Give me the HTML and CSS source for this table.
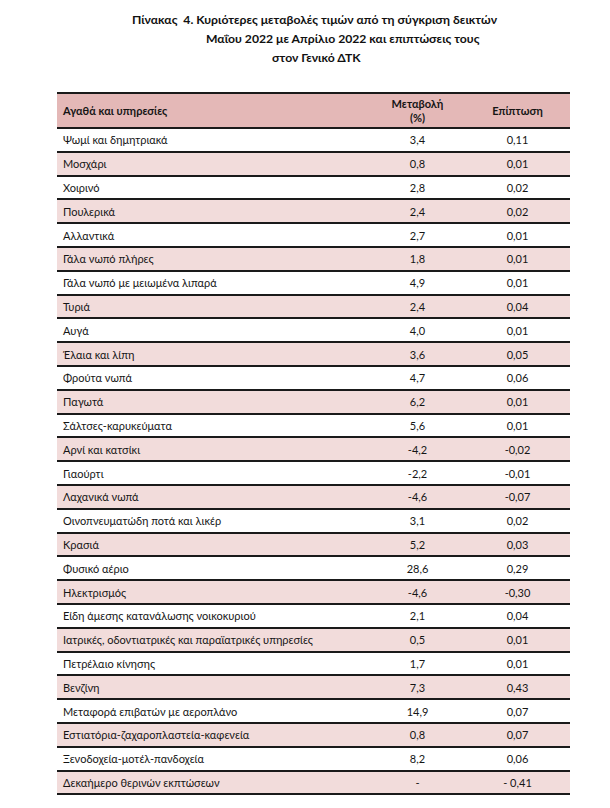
FILE: index.html
```html
<!DOCTYPE html>
<html lang="el">
<head>
<meta charset="utf-8">
<link rel="stylesheet" href="styles.css">
</head>
<body>
<div class="page">
  <div class="title">
    <div class="t1">Πίνακας&nbsp; 4. Κυριότερες μεταβολές τιμών από τη σύγκριση δεικτών</div>
    <div class="t2">Μαΐου 2022 με Απρίλιο 2022 και επιπτώσεις τους</div>
    <div class="t3">στον Γενικό ΔΤΚ</div>
  </div>
  <div class="table">
    <div class="row head">
      <div class="c1">Αγαθά και υπηρεσίες</div>
      <div class="c2">Μεταβολή<br>(%)</div>
      <div class="c3">Επίπτωση</div>
    </div>
    <div class="row"><div class="c1">Ψωμί και δημητριακά</div><div class="c2">3,4</div><div class="c3">0,11</div></div>
    <div class="row alt"><div class="c1">Μοσχάρι</div><div class="c2">0,8</div><div class="c3">0,01</div></div>
    <div class="row"><div class="c1">Χοιρινό</div><div class="c2">2,8</div><div class="c3">0,02</div></div>
    <div class="row alt"><div class="c1">Πουλερικά</div><div class="c2">2,4</div><div class="c3">0,02</div></div>
    <div class="row"><div class="c1">Αλλαντικά</div><div class="c2">2,7</div><div class="c3">0,01</div></div>
    <div class="row alt"><div class="c1">Γάλα νωπό πλήρες</div><div class="c2">1,8</div><div class="c3">0,01</div></div>
    <div class="row"><div class="c1">Γάλα νωπό με μειωμένα λιπαρά</div><div class="c2">4,9</div><div class="c3">0,01</div></div>
    <div class="row alt"><div class="c1">Τυριά</div><div class="c2">2,4</div><div class="c3">0,04</div></div>
    <div class="row"><div class="c1">Αυγά</div><div class="c2">4,0</div><div class="c3">0,01</div></div>
    <div class="row alt"><div class="c1">Έλαια και λίπη</div><div class="c2">3,6</div><div class="c3">0,05</div></div>
    <div class="row"><div class="c1">Φρούτα νωπά</div><div class="c2">4,7</div><div class="c3">0,06</div></div>
    <div class="row alt"><div class="c1">Παγωτά</div><div class="c2">6,2</div><div class="c3">0,01</div></div>
    <div class="row"><div class="c1">Σάλτσες-καρυκεύματα</div><div class="c2">5,6</div><div class="c3">0,01</div></div>
    <div class="row alt"><div class="c1">Αρνί και κατσίκι</div><div class="c2">-4,2</div><div class="c3">-0,02</div></div>
    <div class="row"><div class="c1">Γιαούρτι</div><div class="c2">-2,2</div><div class="c3">-0,01</div></div>
    <div class="row alt"><div class="c1">Λαχανικά νωπά</div><div class="c2">-4,6</div><div class="c3">-0,07</div></div>
    <div class="row"><div class="c1">Οινοπνευματώδη ποτά και λικέρ</div><div class="c2">3,1</div><div class="c3">0,02</div></div>
    <div class="row alt"><div class="c1">Κρασιά</div><div class="c2">5,2</div><div class="c3">0,03</div></div>
    <div class="row"><div class="c1">Φυσικό αέριο</div><div class="c2">28,6</div><div class="c3">0,29</div></div>
    <div class="row alt"><div class="c1">Ηλεκτρισμός</div><div class="c2">-4,6</div><div class="c3">-0,30</div></div>
    <div class="row"><div class="c1">Είδη άμεσης κατανάλωσης νοικοκυριού</div><div class="c2">2,1</div><div class="c3">0,04</div></div>
    <div class="row alt"><div class="c1">Ιατρικές, οδοντιατρικές και παραϊατρικές υπηρεσίες</div><div class="c2">0,5</div><div class="c3">0,01</div></div>
    <div class="row"><div class="c1">Πετρέλαιο κίνησης</div><div class="c2">1,7</div><div class="c3">0,01</div></div>
    <div class="row alt"><div class="c1">Βενζίνη</div><div class="c2">7,3</div><div class="c3">0,43</div></div>
    <div class="row"><div class="c1">Μεταφορά επιβατών με αεροπλάνο</div><div class="c2">14,9</div><div class="c3">0,07</div></div>
    <div class="row alt"><div class="c1">Εστιατόρια-ζαχαροπλαστεία-καφενεία</div><div class="c2">0,8</div><div class="c3">0,07</div></div>
    <div class="row"><div class="c1">Ξενοδοχεία-μοτέλ-πανδοχεία</div><div class="c2">8,2</div><div class="c3">0,06</div></div>
    <div class="row alt"><div class="c1">Δεκαήμερο θερινών εκπτώσεων</div><div class="c2">-</div><div class="c3">- 0,41</div></div>
  </div>
</div>
</body>
</html>
```
FILE: styles.css
```css
html, body {
  margin: 0;
  padding: 0;
  background: #ffffff;
}
body {
  font-family: "Lato", "Open Sans", sans-serif;
  color: #151515;
  font-size: 11px;
}
.page {
  width: 610px;
  padding-top: 10px;
}
.title {
  font-weight: bold;
  font-size: 12.2px;
  line-height: 19px;
  color: #111;
}
.t1 { margin-left: 132px; }
.t2 { margin-left: 206px; }
.t3 { margin-left: 272px; }
.table {
  margin-top: 25px;
  margin-left: 57px;
  width: 513px;
  border-top: 2px solid #1a1a1a;
}
.row {
  display: grid;
  grid-template-columns: 313px 95px 105px;
  align-items: center;
  height: 21.8px;
  border-bottom: 2px solid #1a1a1a;
  background: #ffffff;
}
.row.alt {
  background: #f2dcdb;
}
.row.head {
  height: 33px;
  background: #e4b8b7;
  font-weight: bold;
  line-height: 14px;
}
.c1 {
  padding-left: 6px;
  white-space: nowrap;
}
.c2, .c3 {
  text-align: center;
}
```
